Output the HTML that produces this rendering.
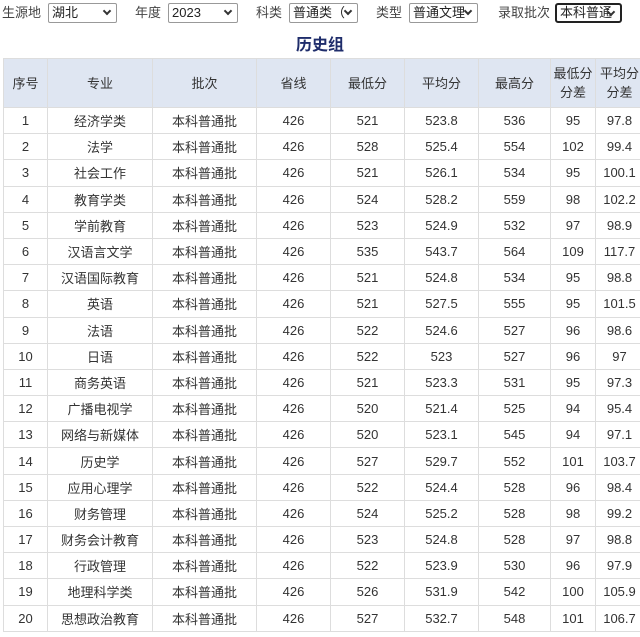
<!DOCTYPE html><html><head><meta charset="utf-8"><style>
body{margin:0;width:640px;height:637px;overflow:hidden;background:#fff;font-family:"Liberation Sans","Noto Sans CJK SC",sans-serif;font-size:13px;color:#333;position:relative}
.l{position:absolute;top:4px;font-size:13px;color:#444;line-height:17px}
.s{position:absolute;top:3px;height:20px;border:1px solid #999;border-radius:2px;box-sizing:border-box;font-size:13px;line-height:18px;padding-left:3px;color:#222;background:#fff;overflow:hidden}
.s:after{content:"";position:absolute;right:6px;top:4px;width:4px;height:4px;border-right:2px solid #333;border-bottom:2px solid #333;transform:rotate(45deg);background:#fff}
h1{position:absolute;top:31px;left:0;width:640px;margin:0;text-align:center;font-size:16px;color:#1f2d6b;font-weight:bold}
table{position:absolute;left:3px;top:58px;border-collapse:collapse;table-layout:fixed;width:640px}
td,th{border:1px solid #ddd;text-align:center;padding:0;font-weight:normal;white-space:nowrap;font-size:13px;overflow:hidden}
th{background:#dfe6f2;height:48px;line-height:19px}
td{height:25.2px}
</style></head><body>
<span class="l" style="left:2px">生源地</span><div class="s" style="left:48px;width:69px">湖北</div>
<span class="l" style="left:135px">年度</span><div class="s" style="left:168px;width:70px">2023</div>
<span class="l" style="left:256px">科类</span><div class="s" style="left:289px;width:69px">普通类（</div>
<span class="l" style="left:376px">类型</span><div class="s" style="left:409px;width:69px">普通文理</div>
<span class="l" style="left:498px">录取批次</span><div class="s" style="left:555px;width:67px;border:2px solid #222;border-radius:3px;line-height:16px">本科普通</div>
<h1>历史组</h1>
<table><colgroup><col style="width:44px"><col style="width:105px"><col style="width:104px"><col style="width:74px"><col style="width:74px"><col style="width:74px"><col style="width:72px"><col style="width:45px"><col style="width:48px"></colgroup>
<tr><th>序号</th><th>专业</th><th>批次</th><th>省线</th><th>最低分</th><th>平均分</th><th>最高分</th><th>最低分<br>分差</th><th>平均分<br>分差</th></tr>
<tr><td>1</td><td>经济学类</td><td>本科普通批</td><td>426</td><td>521</td><td>523.8</td><td>536</td><td>95</td><td>97.8</td></tr>
<tr><td>2</td><td>法学</td><td>本科普通批</td><td>426</td><td>528</td><td>525.4</td><td>554</td><td>102</td><td>99.4</td></tr>
<tr><td>3</td><td>社会工作</td><td>本科普通批</td><td>426</td><td>521</td><td>526.1</td><td>534</td><td>95</td><td>100.1</td></tr>
<tr><td>4</td><td>教育学类</td><td>本科普通批</td><td>426</td><td>524</td><td>528.2</td><td>559</td><td>98</td><td>102.2</td></tr>
<tr><td>5</td><td>学前教育</td><td>本科普通批</td><td>426</td><td>523</td><td>524.9</td><td>532</td><td>97</td><td>98.9</td></tr>
<tr><td>6</td><td>汉语言文学</td><td>本科普通批</td><td>426</td><td>535</td><td>543.7</td><td>564</td><td>109</td><td>117.7</td></tr>
<tr><td>7</td><td>汉语国际教育</td><td>本科普通批</td><td>426</td><td>521</td><td>524.8</td><td>534</td><td>95</td><td>98.8</td></tr>
<tr><td>8</td><td>英语</td><td>本科普通批</td><td>426</td><td>521</td><td>527.5</td><td>555</td><td>95</td><td>101.5</td></tr>
<tr><td>9</td><td>法语</td><td>本科普通批</td><td>426</td><td>522</td><td>524.6</td><td>527</td><td>96</td><td>98.6</td></tr>
<tr><td>10</td><td>日语</td><td>本科普通批</td><td>426</td><td>522</td><td>523</td><td>527</td><td>96</td><td>97</td></tr>
<tr><td>11</td><td>商务英语</td><td>本科普通批</td><td>426</td><td>521</td><td>523.3</td><td>531</td><td>95</td><td>97.3</td></tr>
<tr><td>12</td><td>广播电视学</td><td>本科普通批</td><td>426</td><td>520</td><td>521.4</td><td>525</td><td>94</td><td>95.4</td></tr>
<tr><td>13</td><td>网络与新媒体</td><td>本科普通批</td><td>426</td><td>520</td><td>523.1</td><td>545</td><td>94</td><td>97.1</td></tr>
<tr><td>14</td><td>历史学</td><td>本科普通批</td><td>426</td><td>527</td><td>529.7</td><td>552</td><td>101</td><td>103.7</td></tr>
<tr><td>15</td><td>应用心理学</td><td>本科普通批</td><td>426</td><td>522</td><td>524.4</td><td>528</td><td>96</td><td>98.4</td></tr>
<tr><td>16</td><td>财务管理</td><td>本科普通批</td><td>426</td><td>524</td><td>525.2</td><td>528</td><td>98</td><td>99.2</td></tr>
<tr><td>17</td><td>财务会计教育</td><td>本科普通批</td><td>426</td><td>523</td><td>524.8</td><td>528</td><td>97</td><td>98.8</td></tr>
<tr><td>18</td><td>行政管理</td><td>本科普通批</td><td>426</td><td>522</td><td>523.9</td><td>530</td><td>96</td><td>97.9</td></tr>
<tr><td>19</td><td>地理科学类</td><td>本科普通批</td><td>426</td><td>526</td><td>531.9</td><td>542</td><td>100</td><td>105.9</td></tr>
<tr><td>20</td><td>思想政治教育</td><td>本科普通批</td><td>426</td><td>527</td><td>532.7</td><td>548</td><td>101</td><td>106.7</td></tr>
</table>
</body></html>
